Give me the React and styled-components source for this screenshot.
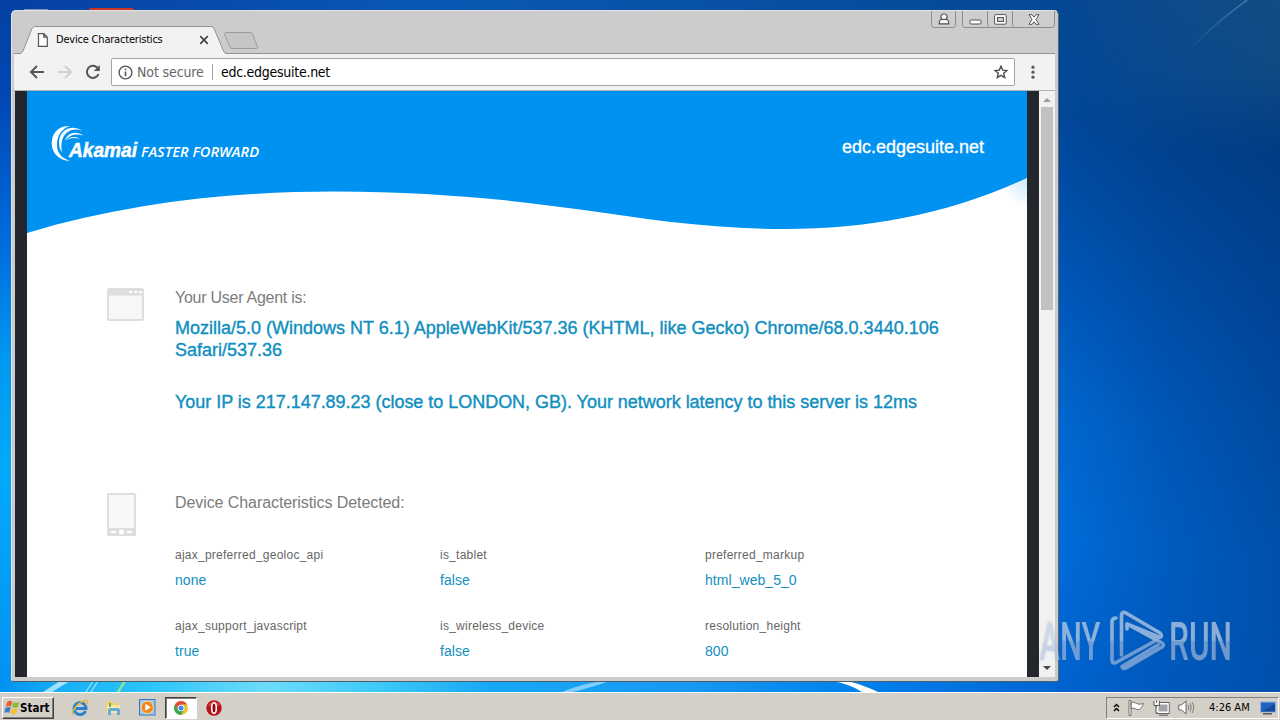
import React from 'react';
import styled, { createGlobalStyle } from 'styled-components';

const device = [
  ['ajax_preferred_geoloc_api', 'none'],
  ['is_tablet', 'false'],
  ['preferred_markup', 'html_web_5_0'],
  ['ajax_support_javascript', 'true'],
  ['is_wireless_device', 'false'],
  ['resolution_height', '800'],
];

function Wallpaper() {
  return (
    <WallpaperSvg width="1280" height="692" viewBox="0 0 1280 692" preserveAspectRatio="none">
      <defs>
        <linearGradient id="wpLeft" x1="0" y1="0" x2="0" y2="1">
          <stop offset="0" stopColor="#0540a2" />
          <stop offset="0.14" stopColor="#0148b4" />
          <stop offset="0.35" stopColor="#006cdc" />
          <stop offset="0.52" stopColor="#0098f0" />
          <stop offset="0.68" stopColor="#02a9fb" />
          <stop offset="1" stopColor="#0391f0" />
        </linearGradient>
        <linearGradient id="wpNear" x1="0" y1="0" x2="0" y2="1">
          <stop offset="0" stopColor="#044895" />
          <stop offset="0.18" stopColor="#00489c" />
          <stop offset="0.4" stopColor="#0057b8" />
          <stop offset="0.62" stopColor="#006ad4" />
          <stop offset="0.78" stopColor="#006edc" />
          <stop offset="1" stopColor="#0064d2" />
        </linearGradient>
        <linearGradient id="wpFar" x1="0" y1="0" x2="0" y2="1">
          <stop offset="0" stopColor="#144c84" />
          <stop offset="0.1" stopColor="#0f4a84" />
          <stop offset="0.22" stopColor="#003c82" />
          <stop offset="0.5" stopColor="#00459a" />
          <stop offset="0.8" stopColor="#0050aa" />
          <stop offset="1" stopColor="#0050ac" />
        </linearGradient>
        <linearGradient id="wpFade" x1="0" y1="0" x2="1" y2="0">
          <stop offset="0" stopColor="#000" />
          <stop offset="0.5" stopColor="#969696" />
          <stop offset="1" stopColor="#fff" />
        </linearGradient>
        <mask id="wpMask">
          <rect x="1050" y="0" width="230" height="692" fill="url(#wpFade)" />
        </mask>
        <linearGradient id="wpTop" x1="0" y1="0" x2="1" y2="0">
          <stop offset="0" stopColor="#0540a2" />
          <stop offset="0.4" stopColor="#0a58b4" />
          <stop offset="1" stopColor="#044895" />
        </linearGradient>
        <linearGradient id="wpBottom" x1="0" y1="0" x2="1" y2="0">
          <stop offset="0" stopColor="#0391f0" />
          <stop offset="0.06" stopColor="#18b0f6" />
          <stop offset="0.14" stopColor="#2cc4f8" />
          <stop offset="0.25" stopColor="#6cdcfa" />
          <stop offset="0.36" stopColor="#3cc8f8" />
          <stop offset="0.46" stopColor="#18a8f6" />
          <stop offset="0.65" stopColor="#1898f2" />
          <stop offset="0.8" stopColor="#0082ec" />
          <stop offset="1" stopColor="#0064d2" />
        </linearGradient>
        <linearGradient id="wpRay" x1="1247" y1="0" x2="1182" y2="58" gradientUnits="userSpaceOnUse">
          <stop offset="0" stopColor="#5888b8" stopOpacity="0.7" />
          <stop offset="1" stopColor="#3c76b4" stopOpacity="0" />
        </linearGradient>
      </defs>
      <rect width="1280" height="692" fill="url(#wpNear)" />
      <rect width="1058" height="14" fill="url(#wpTop)" />
      <rect width="14" height="692" fill="url(#wpLeft)" />
      <rect x="0" y="678" width="1062" height="14" fill="url(#wpBottom)" />
      <rect x="1050" width="230" height="692" fill="url(#wpFar)" mask="url(#wpMask)" />
      <path d="M1247 0 Q1206 30 1182 58" fill="none" stroke="url(#wpRay)" strokeWidth="1.600" />
      <path d="M43 692 L60 681 H70 L52 692Z" fill="#c4f0ff" opacity="0.8" />
      <path d="M86 692 L93 681 M91 692 L98 681" stroke="#9ce6fc" strokeWidth="1.2" />
      <path d="M118 692 L125 681" stroke="#8ee68c" strokeWidth="2.4" />
      <path d="M562 692 Q580 684 604 681 L610 681 Q590 688 572 692Z" fill="#9ed8fa" opacity="0.8" />
      <path d="M832 681 H848 Q866 686 878 692 H862 Q850 684 832 681Z" fill="#fff" />
      <rect x="24" y="9" width="24" height="2" fill="#7e98c4" />
      <path d="M89 11 V9 Q89 8 91 8 H132 Q134 8 134 10 V11Z" fill="#cc3427" />
    </WallpaperSvg>
  );
}

function AkamaiLogo() {
  return (
    <svg width="212" height="40" viewBox="50 123 212 40">
      <g fill="#fff">
        <path d="M70 126 C58 125 51.500 134 51.700 143.500 C52 154 60 161 70 160.800 C60.500 158 56.500 151.500 57 143.500 C57.400 135 62 128.500 70 126Z" />
        <path d="M82.500 131 C73 124.500 62.500 128 59.600 138 C58.400 143 59.200 149 62 152.500 C60.600 144 61.600 137.500 66.500 133 C70.800 129.300 77 128.500 82.500 131Z" />
        <path d="M83.500 135.500 C76 130.500 67.500 132.500 64.800 141 C70 134.500 75.500 133.500 83.500 135.500Z" />
        <path d="M80.500 139 C75 135.300 68.500 137 66.800 140.500 C71 137.500 75 137.500 80.500 139Z" />
      </g>
      <BrandText x="69" y="157" textLength="68" lengthAdjust="spacingAndGlyphs">
        Akamai
      </BrandText>
      <SloganText x="141" y="157" textLength="118" lengthAdjust="spacingAndGlyphs">
        FASTER FORWARD
      </SloganText>
    </svg>
  );
}

function Watermark() {
  return (
    <WatermarkSvg width="216" height="80" viewBox="1032 602 216 80">
      <defs>
        <linearGradient id="wmFill" x1="0" y1="606" x2="0" y2="676" gradientUnits="userSpaceOnUse">
          <stop offset="0.49" stopColor="#c8dcf4" stopOpacity="0.66" />
          <stop offset="0.51" stopColor="#b8cfee" stopOpacity="0.56" />
        </linearGradient>
      </defs>
      <WatermarkText x="1039.500" y="659.500" textLength="61" lengthAdjust="spacingAndGlyphs" fill="url(#wmFill)">
        ANY
      </WatermarkText>
      <WatermarkText x="1169" y="659.500" textLength="63" lengthAdjust="spacingAndGlyphs" fill="url(#wmFill)">
        RUN
      </WatermarkText>
      <path
        d="M1116 618 Q1112 618 1112 622 V660 Q1112 664 1116 662.500 L1155 641 M1121.500 655 V615 Q1122 611 1126 613 L1160 633 Q1163 636 1160 637.500 L1127 624 M1127 629 V624 M1127 624 L1162 643 Q1165 645 1162 647 L1126 668 Q1123 669.500 1122 666.500 L1158 645"
        fill="none"
        stroke="url(#wmFill)"
        strokeWidth="3.600"
        strokeLinejoin="round"
        strokeLinecap="round"
      />
    </WatermarkSvg>
  );
}

function TabStrip() {
  return (
    <Strip>
      <StripShape width="260" height="29" viewBox="14 25 260 29">
        <path d="M14 53.500 H20 Q22 53 23 51 L32 28.500 Q33 26.500 35 26.500 H211 Q213 26.500 214 28.500 L223.500 51 Q224.500 53.500 227 53.500 H274 V55 H14Z" fill="#f2f2f2" />
        <path d="M14 53.500 H20 Q22 53 23 51 L32 28.500 Q33 26.500 35 26.500 H211 Q213 26.500 214 28.500 L223.500 51 Q224.500 53.500 227 53.500 H274" fill="none" stroke="#929292" />
        <path d="M226.500 32.500 H250.500 Q252 32.500 252.500 34 L257.500 47 Q257.500 48.500 256 48.500 H232 Q230.500 48.500 230 47 L224.500 34 Q224.500 32.500 226.500 32.500Z" fill="#c6c6c6" stroke="#9a9a9a" />
      </StripShape>
      <TabLabel>
        <svg width="12" height="14" viewBox="0 0 12 14">
          <path d="M1.500 0.700 H6.800 L10.300 4.200 V13.300 H1.500Z M6.800 0.700 V4.200 H10.300" fill="#fff" stroke="#555" strokeWidth="1.200" />
        </svg>
        <TabTitle>Device Characteristics</TabTitle>
        <svg width="10" height="10" viewBox="0 0 10 10">
          <path d="M1.200 1.200 L8.800 8.800 M8.800 1.200 L1.200 8.800" stroke="#444" strokeWidth="1.700" />
        </svg>
      </TabLabel>
    </Strip>
  );
}

function WindowButtons() {
  return (
    <Caption>
      <CaptionGroup>
        <CaptionButton $w={23}>
          <svg width="12" height="13" viewBox="0 0 12 13">
            <path d="M6 1 A2.800 2.800 0 0 1 8 6 Q10.800 6.500 10.800 10.800 H1.200 Q1.200 6.500 4 6 A2.800 2.800 0 0 1 6 1Z M3.800 6.500 H8.200" fill="#f4f4f4" stroke="#555" strokeWidth="1.200" />
          </svg>
        </CaptionButton>
      </CaptionGroup>
      <CaptionGroup>
        <CaptionButton $w={24}>
          <svg width="13" height="13" viewBox="0 0 13 13">
            <rect x="1" y="7" width="11" height="4" rx="1" fill="#fff" stroke="#555" />
          </svg>
        </CaptionButton>
        <CaptionButton $w={25}>
          <svg width="13" height="11" viewBox="0 0 13 11">
            <rect x="0.600" y="0.600" width="11.600" height="9.600" rx="1" fill="#fff" stroke="#555" />
            <rect x="3.500" y="3.500" width="6" height="4" fill="#ccc" stroke="#555" />
          </svg>
        </CaptionButton>
        <CaptionButton $w={42}>
          <svg width="12" height="11" viewBox="0 0 12 11">
            <path d="M1 0.700 H4 L6 3.200 L8 0.700 H11 L8 5.500 L11 10.300 H8 L6 7.800 L4 10.300 H1 L4 5.500Z" fill="#fff" stroke="#555" />
          </svg>
        </CaptionButton>
      </CaptionGroup>
    </Caption>
  );
}

function Toolbar() {
  return (
    <Bar>
      <NavIcons>
        <svg width="16" height="14" viewBox="0 0 16 14">
          <path d="M15 7 H2 M8 1 L2 7 L8 13" fill="none" stroke="#555" strokeWidth="2" />
        </svg>
        <svg width="16" height="14" viewBox="0 0 16 14">
          <path d="M1 7 H14 M8 1 L14 7 L8 13" fill="none" stroke="#d0d0d0" strokeWidth="2" />
        </svg>
        <svg width="16" height="16" viewBox="0 0 16 16">
          <path d="M13.500 10 A6 6 0 1 1 12.300 3.800" fill="none" stroke="#555" strokeWidth="2" />
          <path d="M14.800 1 V7 H8.800Z" fill="#555" />
        </svg>
      </NavIcons>
      <Omnibox>
        <svg width="15" height="15" viewBox="0 0 15 15">
          <circle cx="7.500" cy="7.500" r="6.400" fill="none" stroke="#555" strokeWidth="1.400" />
          <path d="M7.500 6.600 V11.200 M7.500 3.700 V5.300" stroke="#555" strokeWidth="1.600" />
        </svg>
        <Security>Not secure</Security>
        <Url>edc.edgesuite.net</Url>
        <svg width="14" height="14" viewBox="0 0 14 14">
          <path d="M7 1.200 L8.700 5.100 L12.900 5.500 L9.700 8.300 L10.700 12.500 L7 10.300 L3.300 12.500 L4.300 8.300 L1.100 5.500 L5.300 5.100Z" fill="none" stroke="#4a4a4a" strokeWidth="1.400" />
        </svg>
      </Omnibox>
      <svg width="4" height="14" viewBox="0 0 4 14">
        <circle cx="2" cy="2.200" r="1.600" fill="#5a5a5a" />
        <circle cx="2" cy="7.200" r="1.600" fill="#5a5a5a" />
        <circle cx="2" cy="12.200" r="1.600" fill="#5a5a5a" />
      </svg>
    </Bar>
  );
}

function Page() {
  return (
    <Viewport>
      <Sheet>
        <Header>
          <AkamaiLogo />
          <Host>edc.edgesuite.net</Host>
        </Header>
        <svg width="1000" height="60" viewBox="27 178 1000 60">
          <defs>
            <radialGradient id="corner" cx="1027" cy="182" r="26" gradientUnits="userSpaceOnUse">
              <stop offset="0" stopColor="#cfe9fc" />
              <stop offset="1" stopColor="#fff" />
            </radialGradient>
          </defs>
          <path d="M960 178 H1027 V212 H960Z" fill="url(#corner)" />
          <path d="M27 177 V233 C130 202 235 191.500 335 191.500 C425 191.500 505 199 580 209.500 C650 219.500 710 229 785 229 C870 229 950 214 1027 178 V177Z" fill="#0092f1" />
        </svg>
        <Section $top={50}>
          <svg width="38" height="34" viewBox="0 0 38 34">
            <rect x="1" y="1" width="35" height="31" rx="1" fill="#f7f7f7" stroke="#dedede" strokeWidth="2" />
            <path d="M0.500 1 H36.500 V7.500 H0.500Z" fill="#dedede" />
            <path d="M22 3 h3 v2 h-3z M27 3 h3 v2 h-3z M32 3 h3 v2 h-3z" fill="#fff" />
          </svg>
          <div>
            <Heading $track={-0.26}>Your User Agent is:</Heading>
            <Agent>
              Mozilla/5.0 (Windows NT 6.1) AppleWebKit/537.36 (KHTML, like Gecko) Chrome/68.0.3440.106
              <br />
              Safari/537.36
            </Agent>
            <Agent $gap={30} $track={-0.027}>
              Your IP is 217.147.89.23 (close to LONDON, GB). Your network latency to this server is 12ms
            </Agent>
          </div>
        </Section>
        <Section $top={80}>
          <svg width="30" height="44" viewBox="0 0 30 44">
            <rect x="0" y="0" width="29" height="43" rx="1.500" fill="#dedede" />
            <rect x="2" y="2" width="25" height="33" fill="#f8f8f8" />
            <path d="M4 38 h5 v2 h-5z M20 38 h5 v2 h-5z" fill="#fff" />
            <circle cx="14.500" cy="39" r="2.600" fill="#fff" />
          </svg>
          <div>
            <Heading $track={-0.08}>Device Characteristics Detected:</Heading>
            <Grid>
              {device.map(([name, value]) => (
                <div key={name}>
                  <Name>{name}</Name>
                  <Value>{value}</Value>
                </div>
              ))}
            </Grid>
          </div>
        </Section>
      </Sheet>
      <Scrollbar>
        <svg width="8" height="4" viewBox="0 0 8 4">
          <path d="M0 4 L4 0 L8 4Z" fill="#9c9c9c" />
        </svg>
        <Thumb />
        <svg width="8" height="4" viewBox="0 0 8 4">
          <path d="M0 0 L4 4 L8 0Z" fill="#484848" />
        </svg>
      </Scrollbar>
    </Viewport>
  );
}

function Taskbar() {
  return (
    <TaskbarRow>
      <StartButton>
        <svg width="16" height="15" viewBox="-0.500 0 15 14">
          <path d="M2.500 1.500 Q5 0 7.300 1.500 L6 6.200 Q3.500 5 1.200 6.400Z" fill="#e8602c" />
          <path d="M8.200 2 Q11 3.300 14 1.800 L12.600 6.600 Q9.800 8 7 6.600Z" fill="#86bc3c" />
          <path d="M1 7.300 Q3.500 6 5.800 7.200 L4.400 12 Q2 10.800 -0.300 12Z" fill="#3c7cd0" />
          <path d="M6.700 7.700 Q9.500 9 12.300 7.600 L10.900 12.400 Q8 13.800 5.400 12.400Z" fill="#f6c030" />
        </svg>
        <StartText>Start</StartText>
      </StartButton>
      <Quick>
        <TaskItem>
          <svg width="18" height="18" viewBox="0 0 18 18">
            <path d="M14.500 12 A6 6 0 1 1 15 9.500 H5" fill="none" stroke="#2a80d2" strokeWidth="3" />
            <path d="M2 16 Q-0.500 14 5 7.500 Q11 1 16 1.500 Q17.500 2.500 15 6" fill="none" stroke="#e8b830" strokeWidth="1.500" />
          </svg>
        </TaskItem>
        <TaskItem>
          <svg width="17" height="16" viewBox="0 0 17 16">
            <path d="M1 2 L6 1 L8 3 H14 V13 H1Z" fill="#e9cf70" />
            <path d="M2 5 H15 V13 H2Z" fill="#f8eaa6" />
            <path d="M3 15 V9.500 Q3 8 5 8 H13 Q15 8 15 10 V15 H12 V11 H6 V15Z" fill="#62acd8" />
            <path d="M4 3 H6 V7 H4Z" fill="#66b05a" />
          </svg>
        </TaskItem>
        <TaskItem>
          <svg width="17" height="17" viewBox="0 0 17 17">
            <rect x="0.500" y="0.500" width="15.500" height="15.500" fill="#9cc8ee" stroke="#3a78bc" />
            <circle cx="8.300" cy="8.300" r="6.200" fill="#f08818" stroke="#fcd9a0" />
            <path d="M6.300 4.800 L12 8.300 L6.300 11.800Z" fill="#fff" />
          </svg>
        </TaskItem>
        <TaskItem $active>
          <svg width="14" height="14" viewBox="0 0 14 14">
            <circle cx="7" cy="7" r="7" fill="#f2c230" />
            <path d="M7 3.500 H13.060 A7 7 0 0 0 0.940 3.500 L4 8.500Z" fill="#dd4b39" />
            <path d="M0.940 3.500 A7 7 0 0 0 7 14 L10 8.800 L4 8.800Z" fill="#3aa757" />
            <circle cx="7" cy="7" r="3.300" fill="#fff" />
            <circle cx="7" cy="7" r="2.500" fill="#4285e8" />
          </svg>
        </TaskItem>
        <TaskItem>
          <svg width="16" height="16" viewBox="0 0 16 16">
            <circle cx="8" cy="8" r="7.700" fill="#b8121c" />
            <path d="M2 5 A7 7 0 0 1 14 5 Q8 9 2 5Z" fill="#e0504c" opacity="0.700" />
            <ellipse cx="8" cy="8" rx="2.300" ry="5.300" fill="#8c0810" stroke="#fff" strokeWidth="1.600" />
          </svg>
        </TaskItem>
      </Quick>
      <Tray>
        <svg width="7" height="9" viewBox="0 0 7 9">
          <path d="M1 4 L3.500 1.500 L6 4 M1 8 L3.500 5.500 L6 8" fill="none" stroke="#000" strokeWidth="1.400" />
        </svg>
        <svg width="17" height="16" viewBox="0 0 17 16">
          <path d="M1 0.500 H3 V15.500 H1Z M3 2.500 Q6 1 8.500 3.500 Q11 5 15.500 3.500 Q14.500 7 11.500 9.500 Q8 10 7 8.500 Q5 7.500 3 9Z" fill="#fff" stroke="#666" strokeWidth="0.900" />
        </svg>
        <svg width="17" height="16" viewBox="0 0 17 16">
          <path d="M4.500 3.500 H15.500 V12.500 H4.500Z" fill="#a4a4a4" stroke="#fff" strokeWidth="2" />
          <path d="M3.500 2.500 H16.300 V13.500 H3.500Z M6 15.200 H15" fill="none" stroke="#555" strokeWidth="0.900" />
          <path d="M1 1 V5.500 H6.500 V1 M3.700 0.500 V3 M3 5.500 V13 H5" fill="#fff" stroke="#555" />
        </svg>
        <svg width="17" height="15" viewBox="0 0 17 15">
          <path d="M0.800 5 H3.500 L8 1 V14 L3.500 10 H0.800Z" fill="#fff" stroke="#666" />
          <path d="M10 5 Q11.500 7.500 10 10 M12 3.500 Q14.500 7.500 12 11.500 M14 2 Q17.500 7.500 14 13" fill="none" stroke="#777" />
        </svg>
        <Clock>4:26 AM</Clock>
        <svg width="16" height="14" viewBox="0 0 16 14">
          <rect x="0.500" y="1" width="15" height="10" fill="#2462c0" stroke="#8ab0e0" />
          <path d="M1 10.500 L15 3 V10.500Z" fill="#174a9c" />
          <path d="M3 12.800 H12" stroke="#444" strokeWidth="1.300" />
        </svg>
      </Tray>
    </TaskbarRow>
  );
}

export default function App() {
  return (
    <>
      <GlobalStyle />
      <Desktop>
        <Wallpaper />
        <BrowserWindow>
          <TitleRow>
            <TabStrip />
            <WindowButtons />
          </TitleRow>
          <Toolbar />
          <Page />
        </BrowserWindow>
        <Watermark />
        <Taskbar />
      </Desktop>
    </>
  );
}

const GlobalStyle = createGlobalStyle`
  * {
    box-sizing: border-box;
  }
  body {
    margin: 0;
    overflow: hidden;
    font-family: 'Liberation Sans', Arial, sans-serif;
  }
  svg {
    display: block;
    flex: none;
  }
`;

const Desktop = styled.div`
  position: relative;
  display: flex;
  flex-direction: column;
  justify-content: flex-end;
  width: 1280px;
  height: 720px;
  overflow: hidden;
`;

const WallpaperSvg = styled.svg`
  position: absolute;
  left: 0;
  top: 0;
`;

const BrowserWindow = styled.div`
  position: absolute;
  left: 11px;
  top: 10px;
  display: flex;
  flex-direction: column;
  width: 1048px;
  height: 672px;
  padding: 0 3px 4px 2px;
  background: #cccccc;
  border: 1px solid #e6e4e2;
  border-right-color: #5c6470;
  border-bottom-color: #4c5c68;
  border-radius: 5px 5px 3px 3px;
`;

const TitleRow = styled.div`
  display: flex;
  justify-content: space-between;
  flex: none;
  height: 43px;
  box-shadow: inset 0 -1px 0 #929292;
`;

const Strip = styled.div`
  display: grid;
  align-items: end;
`;

const StripShape = styled.svg`
  grid-area: 1 / 1;
`;

const TabLabel = styled.div`
  grid-area: 1 / 1;
  display: flex;
  align-items: center;
  width: 195px;
  height: 27px;
  padding: 0 0 1px 23px;
`;

const TabTitle = styled.span`
  flex: 1;
  margin-left: 7px;
  font: 11px/14px 'DejaVu Sans Condensed', 'DejaVu Sans', sans-serif;
  letter-spacing: -0.2px;
  padding-bottom: 1px;
  color: #000;
`;

const Caption = styled.div`
  display: flex;
  gap: 6px;
  height: 17px;
`;

const CaptionGroup = styled.div`
  display: flex;
  border: 1px solid #8c8c8c;
  border-top: 0;
  border-radius: 0 0 4px 4px;
`;

const CaptionButton = styled.div`
  display: flex;
  align-items: center;
  justify-content: center;
  width: ${(p) => p.$w}px;
  background: #cecece;
  border-radius: 0 0 3px 3px;

  & + & {
    border-left: 1px solid #8c8c8c;
  }
`;

const Bar = styled.div`
  display: flex;
  align-items: center;
  flex: none;
  height: 37px;
  padding: 0 19px 0 15px;
  background: #f2f2f2;
  border-bottom: 1px solid #b2b2b2;
`;

const NavIcons = styled.div`
  display: flex;
  align-items: center;
  gap: 12px;
  width: 82px;
`;

const Omnibox = styled.div`
  display: flex;
  align-items: center;
  width: 904px;
  height: 28px;
  margin-right: 16px;
  padding: 0 6px;
  background: #fff;
  border: 1px solid #a6a6a6;
  border-radius: 2px;
`;

const Security = styled.span`
  width: 76px;
  height: 16px;
  margin-left: 4px;
  border-right: 1px solid #a0a0a0;
  font: 14px/16px 'DejaVu Sans Condensed', 'DejaVu Sans', sans-serif;
  letter-spacing: -0.12px;
  color: #666;
  white-space: nowrap;
`;

const Url = styled.span`
  flex: 1;
  margin-left: 8px;
  font: 14px/16px 'DejaVu Sans Condensed', 'DejaVu Sans', sans-serif;
  letter-spacing: -0.27px;
  color: #000;
`;

const Viewport = styled.div`
  display: flex;
  flex: 1;
  min-height: 0;
  margin-left: 1px;
  background: #23262d;
`;

const Sheet = styled.div`
  width: 1000px;
  height: 100%;
  margin: 0 12px;
  overflow: hidden;
  background: #fff;
`;

const Header = styled.div`
  display: flex;
  align-items: flex-start;
  justify-content: space-between;
  height: 87px;
  padding: 32px 43px 0 23px;
  background: #0092f1;
`;

const Host = styled.span`
  margin-top: 13px;
  font-size: 18px;
  line-height: 22px;
  color: #fff;
  -webkit-text-stroke: 0.3px #fff;
`;

const BrandText = styled.text`
  font: italic bold 19.5px 'Liberation Sans', Arial, sans-serif;
  fill: #fff;
  stroke: #fff;
  stroke-width: 0.5px;
`;

const SloganText = styled.text`
  font: italic 600 14px 'Open Sans', 'Noto Sans', sans-serif;
  fill: #fff;
`;

const Section = styled.div`
  display: grid;
  grid-template-columns: 68px 1fr;
  padding: ${(p) => p.$top}px 0 0 80px;
`;

const Heading = styled.div`
  padding-top: 1px;
  font-size: 16px;
  line-height: 18px;
  letter-spacing: ${(p) => p.$track}px;
  color: #7c7c7c;
`;

const Agent = styled.div`
  margin-top: ${(p) => p.$gap || 10}px;
  font-size: 18px;
  line-height: 22px;
  letter-spacing: ${(p) => p.$track || 0}px;
  color: #118fc0;
  white-space: nowrap;
  -webkit-text-stroke: 0.4px #118fc0;
`;

const Grid = styled.div`
  display: grid;
  grid-template-columns: repeat(3, 265px);
  grid-auto-rows: 71px;
  margin-top: 35px;
`;

const Name = styled.div`
  font-size: 12px;
  line-height: 16px;
  letter-spacing: 0.25px;
  color: #666;
`;

const Value = styled.div`
  margin-top: 8px;
  font-size: 14px;
  line-height: 18px;
  letter-spacing: 0.05px;
  color: #118fc0;
`;

const Scrollbar = styled.div`
  display: flex;
  flex-direction: column;
  align-items: center;
  width: 16px;
  padding: 7px 0;
  background: #f1f1f1;
`;

const Thumb = styled.div`
  width: 12px;
  height: 203px;
  margin: 5px 0 auto;
  background: #c1c1c1;
`;

const WatermarkSvg = styled.svg`
  position: absolute;
  left: 1032px;
  top: 602px;
  overflow: visible;
  filter: drop-shadow(0 0 1px rgba(90, 90, 90, 0.35));
`;

const WatermarkText = styled.text`
  font-family: Roboto, sans-serif;
  font-size: 53px;
  font-weight: 500;
`;

const TaskbarRow = styled.div`
  position: relative;
  display: flex;
  align-items: center;
  height: 28px;
  padding: 2px 1px 0 2px;
  background: #d4d0c8;
  border-top: 1px solid #fff;
`;

const StartButton = styled.div`
  display: flex;
  align-items: center;
  width: 52px;
  height: 22px;
  padding-left: 1px;
  border: 1px solid;
  border-color: #fff #404040 #404040 #fff;
  box-shadow: inset -1px -1px 0 #808080;
`;

const StartText = styled.span`
  font: bold 11.5px 'DejaVu Sans Condensed', 'DejaVu Sans', sans-serif;
  color: #000;
`;

const Quick = styled.div`
  display: flex;
  flex: 1;
  gap: 1.5px;
  padding-left: 10px;
`;

const TaskItem = styled.div`
  display: flex;
  align-items: center;
  justify-content: center;
  width: 32px;
  height: 22px;
  border: 1px solid transparent;
  ${(p) =>
    p.$active &&
    `
    background: #fff;
    border-color: #404040 #fff #fff #404040;
    box-shadow: inset 1px 1px 0 #808080;
  `}
`;

const Tray = styled.div`
  display: flex;
  align-items: center;
  gap: 8px;
  width: 173px;
  height: 22px;
  padding: 0 2px 0 6px;
  border: 1px solid;
  border-color: #808080 #fff #fff #808080;
`;

const Clock = styled.span`
  flex: 1;
  margin-left: 6px;
  font: 11px 'DejaVu Sans Condensed', 'DejaVu Sans', sans-serif;
  color: #000;
`;
